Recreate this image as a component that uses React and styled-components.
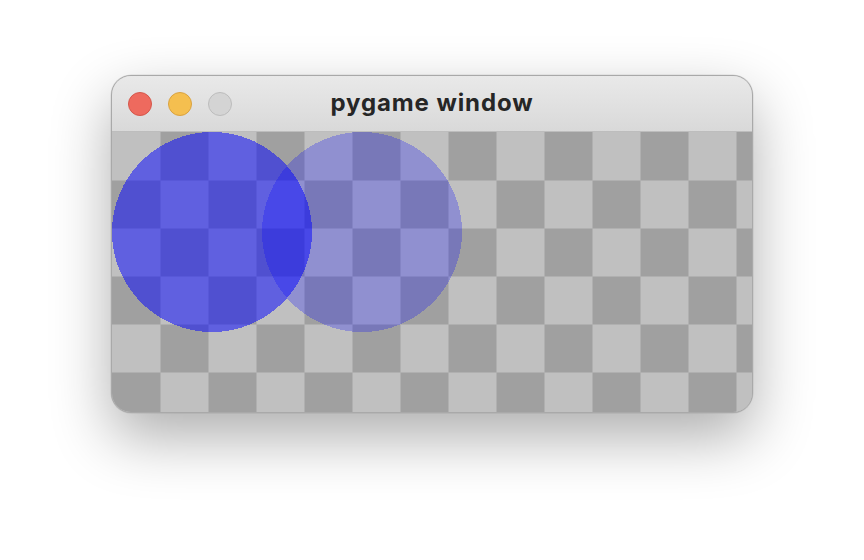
import styled, { createGlobalStyle } from "styled-components";

const GlobalStyle = createGlobalStyle`
  html, body {
    margin: 0;
    padding: 0;
    background: #ffffff;
  }
  body {
    width: 864px;
    height: 560px;
    overflow: hidden;
    font-family: "Inter", "Liberation Sans", sans-serif;
  }
`;

const SQUARE = 48;
const COLS = 14;
const ROWS = 6;

const Checkerboard = () => {
  const cells = [];
  for (let r = 0; r < ROWS; r++) {
    for (let c = 0; c < COLS; c++) {
      if ((r + c) % 2 === 1) {
        cells.push(<rect key={`${r}-${c}`} x={c * SQUARE} y={r * SQUARE} width={SQUARE} height={SQUARE} fill="#a0a0a0" />);
      }
    }
  }
  const lines = [];
  for (let c = 1; c < COLS; c++) {
    lines.push(<rect key={`v${c}`} x={c * SQUARE} y={0} width={1} height={280} fill="#b0b0b0" />);
  }
  for (let r = 1; r < ROWS; r++) {
    lines.push(<rect key={`h${r}`} x={0} y={r * SQUARE} width={640} height={1} fill="#b0b0b0" />);
  }
  return (
    <g shapeRendering="crispEdges">
      <rect x={0} y={0} width={640} height={280} fill="#c0c0c0" />
      {cells}
      {lines}
    </g>
  );
};

const App = () => {
  return (
    <>
      <GlobalStyle />
      <Page>
        <Window>
          <TitleBar>
            <Lights>
              <Light $color="#ee6a5e" $edge="#d4574b" />
              <Light $color="#f5bf4f" $edge="#d9a240" />
              <Light $color="#d4d4d4" $edge="#bcbcbc" />
            </Lights>
            <Title>pygame window</Title>
            <span />
          </TitleBar>
          <Canvas>
            <svg width="640" height="280" viewBox="0 0 640 280">
              <Checkerboard />
              <circle cx="250" cy="100" r="100" fill="rgba(0,0,255,0.25)" shapeRendering="crispEdges" />
              <circle cx="100" cy="100" r="100" fill="rgba(0,0,255,0.5)" shapeRendering="crispEdges" />
            </svg>
          </Canvas>
        </Window>
      </Page>
    </>
  );
};

export default App;

/* ---------------------------- Styled Components --------------------------- */

const Page = styled.main`
  width: 864px;
  height: 560px;
  box-sizing: border-box;
  padding-top: 75px;
  display: flex;
  justify-content: center;
  align-items: flex-start;
`;

const Window = styled.section`
  width: 640px;
  border: 1px solid #a9a9a9;
  border-radius: 20px;
  overflow: hidden;
  background: #c0c0c0;
  box-shadow: 0 24px 60px rgba(0, 0, 0, 0.32), 0 0 0 0.5px rgba(0, 0, 0, 0.1);
  display: flex;
  flex-direction: column;
`;

const TitleBar = styled.header`
  height: 55px;
  padding: 0 16px;
  background: linear-gradient(#e9e9e9, #d9d9d9);
  border-bottom: 1px solid #bdbdbd;
  display: grid;
  grid-template-columns: 1fr auto 1fr;
  align-items: center;
  box-sizing: content-box;
`;

const Lights = styled.div`
  display: flex;
  gap: 16px;
  align-items: center;
`;

const Light = styled.span`
  width: 24px;
  height: 24px;
  box-sizing: border-box;
  border-radius: 50%;
  background: ${props => props.$color};
  border: 1px solid ${props => props.$edge};
`;

const Title = styled.h1`
  margin: 0;
  font-family: "Inter", "Liberation Sans", sans-serif;
  font-weight: 700;
  font-size: 24px;
  color: #262626;
  letter-spacing: 0.9px;
  line-height: 1;
  padding-bottom: 1px;
`;

const Canvas = styled.div`
  width: 640px;
  height: 280px;
  display: flex;

  svg {
    display: block;
  }
`;
